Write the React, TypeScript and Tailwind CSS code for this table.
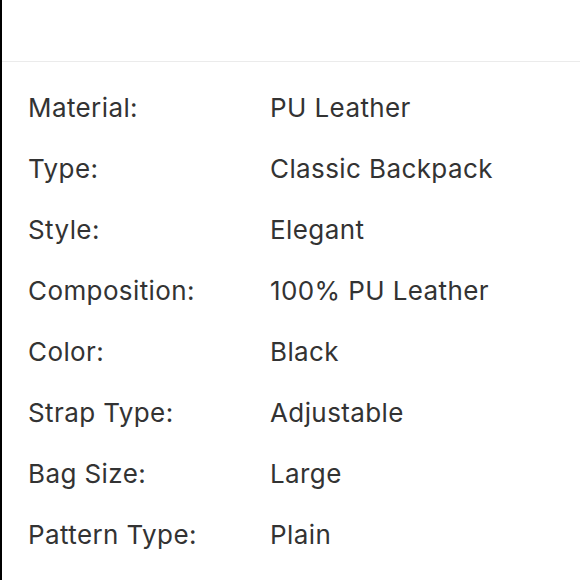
const specs: [string, string][] = [
  ["Material:", "PU Leather"],
  ["Type:", "Classic Backpack"],
  ["Style:", "Elegant"],
  ["Composition:", "100% PU Leather"],
  ["Color:", "Black"],
  ["Strap Type:", "Adjustable"],
  ["Bag Size:", "Large"],
  ["Pattern Type:", "Plain"],
];

export default function App() {
  return (
    <div className="w-[580px] h-[580px] bg-white border-l-2 border-black overflow-hidden font-['Inter',sans-serif] text-[#333]">
      <div className="h-[62px] border-b border-[#ebebeb]" />
      <div className="pt-[15px] pl-[26px]">
        {specs.map(([label, value]) => (
          <div key={label} className="grid grid-cols-[242px_1fr] h-[61px] items-center text-[26px] leading-none tracking-[0.4px]">
            <span>{label}</span>
            <span>{value}</span>
          </div>
        ))}
      </div>
    </div>
  );
}
